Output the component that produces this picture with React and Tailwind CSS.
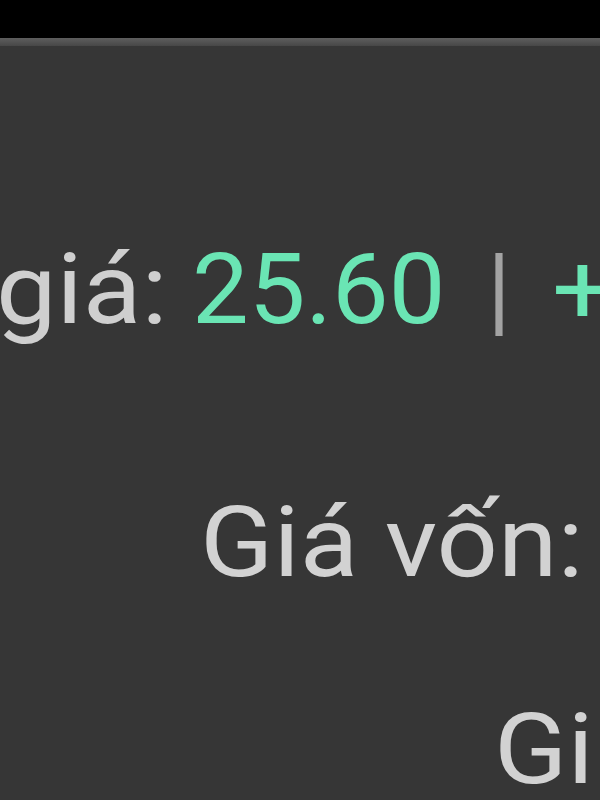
export default function App() {
  return (
    <div className="w-[600px] h-[800px] overflow-hidden bg-[#363636] font-['Roboto',sans-serif] flex flex-col">
      <div className="h-[38px] bg-black shrink-0" />
      <div className="h-[8px] shrink-0 bg-gradient-to-b from-[#5e5e5e] to-[#474747]" />

      {/* giá: 25.60 | + */}
      <div className="mt-[195px] h-[98px] text-[98px] leading-[98px] whitespace-nowrap flex -ml-[4px]">
        <span className="w-[196px] shrink-0 inline-block origin-left scale-x-[1.1] text-[#cfcfcf]">giá:</span>
        <span className="w-[295px] shrink-0 inline-block origin-left scale-x-[1.03] text-[#6ae5b4]">25.60</span>
        <span className="w-[65px] shrink-0 inline-block text-[#a3a3a3]">|</span>
        <span className="shrink-0 inline-block origin-left scale-x-[1.1] text-[#6ae5b4]">+</span>
      </div>

      <div className="mt-[155px] h-[98px] text-[98px] leading-[98px] whitespace-nowrap text-[#d2d2d2] pl-[200px]">
        <span className="inline-block origin-left scale-x-[1.1]">Giá vốn:</span>
      </div>

      <div className="mt-[109px] h-[98px] text-[98px] leading-[98px] whitespace-nowrap text-[#d2d2d2] pl-[494px]">
        <span className="inline-block origin-left scale-x-[1.1]">Gi</span>
      </div>
    </div>
  );
}
